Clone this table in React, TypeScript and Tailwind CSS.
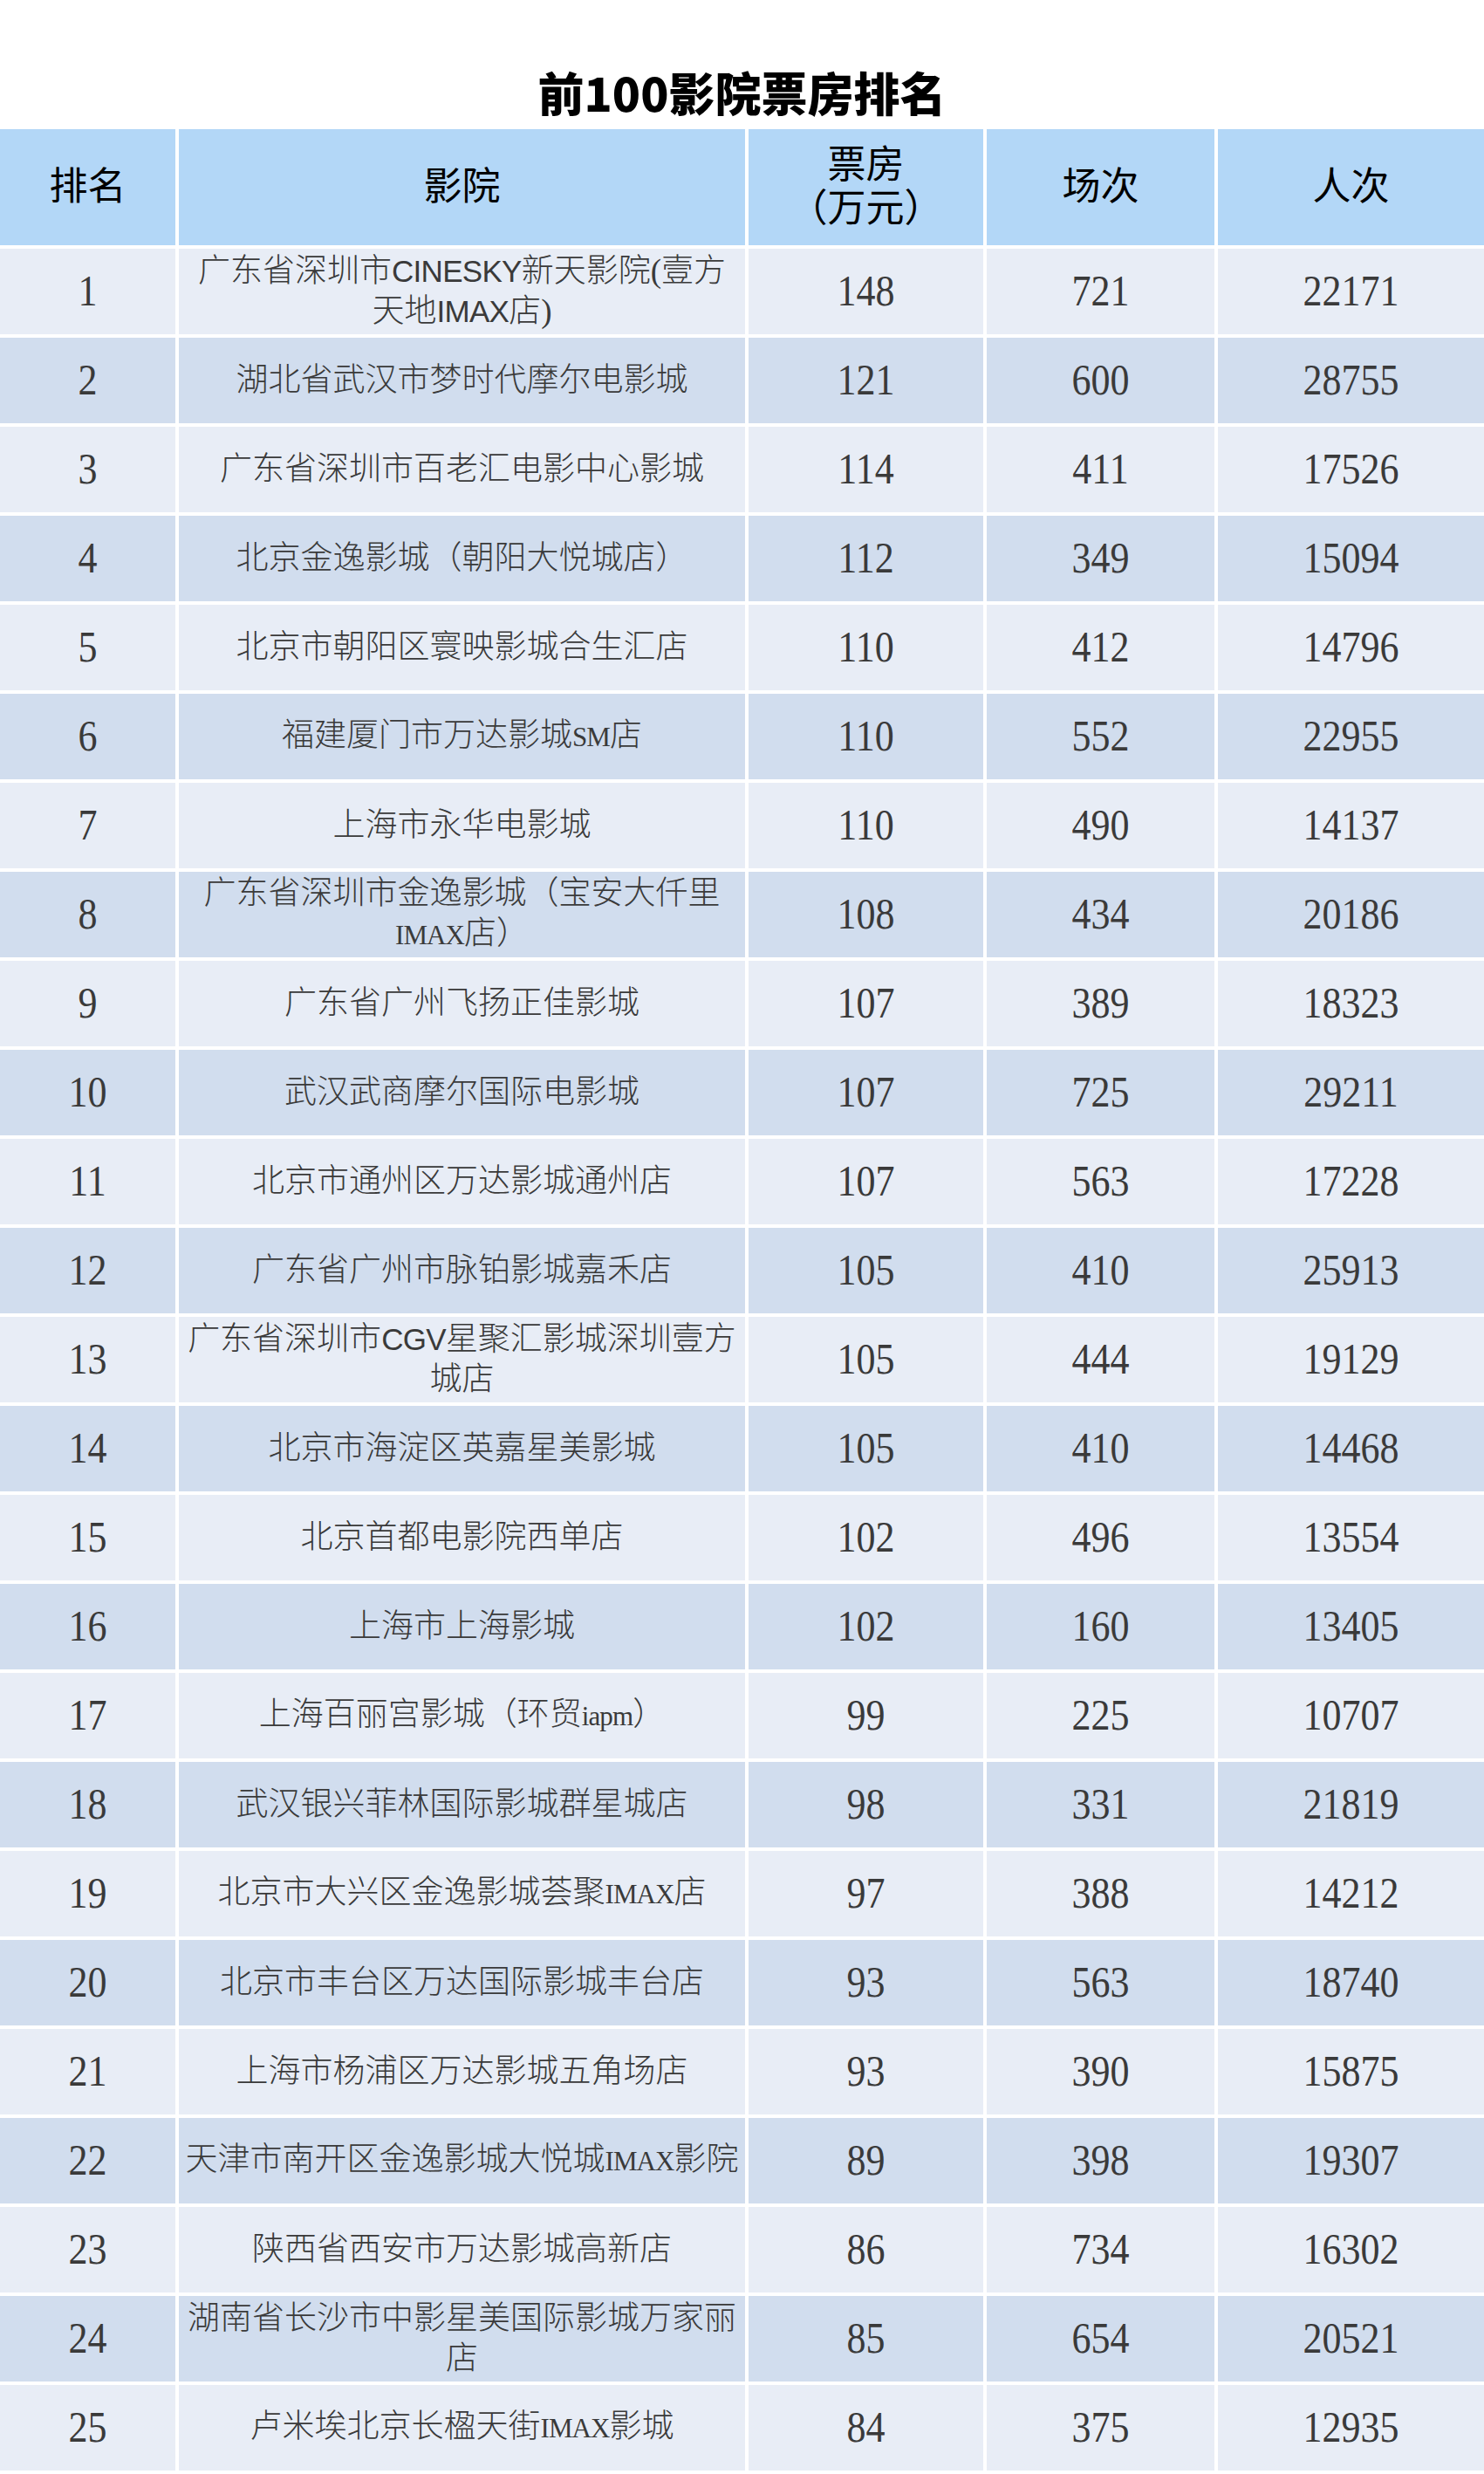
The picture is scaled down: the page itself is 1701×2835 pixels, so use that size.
import React from "react";

type Seg = { t: string; sans?: boolean; lat?: boolean };
type Row = { rank: number; lines: Seg[][]; box: number; shows: number; people: number };

const s = (t: string, sans?: boolean): Seg => ({ t, sans });
const l = (t: string): Seg => ({ t, lat: true });

const rows: Row[] = [
  { rank: 1, lines: [[s("广东省深圳市"), s("CINESKY", true), s("新天影院(壹方")], [s("天地"), s("IMAX", true), s("店)")]], box: 148, shows: 721, people: 22171 },
  { rank: 2, lines: [[s("湖北省武汉市梦时代摩尔电影城")]], box: 121, shows: 600, people: 28755 },
  { rank: 3, lines: [[s("广东省深圳市百老汇电影中心影城")]], box: 114, shows: 411, people: 17526 },
  { rank: 4, lines: [[s("北京金逸影城（朝阳大悦城店）")]], box: 112, shows: 349, people: 15094 },
  { rank: 5, lines: [[s("北京市朝阳区寰映影城合生汇店")]], box: 110, shows: 412, people: 14796 },
  { rank: 6, lines: [[s("福建厦门市万达影城"), l("SM"), s("店")]], box: 110, shows: 552, people: 22955 },
  { rank: 7, lines: [[s("上海市永华电影城")]], box: 110, shows: 490, people: 14137 },
  { rank: 8, lines: [[s("广东省深圳市金逸影城（宝安大仟里")], [l("IMAX"), s("店）")]], box: 108, shows: 434, people: 20186 },
  { rank: 9, lines: [[s("广东省广州飞扬正佳影城")]], box: 107, shows: 389, people: 18323 },
  { rank: 10, lines: [[s("武汉武商摩尔国际电影城")]], box: 107, shows: 725, people: 29211 },
  { rank: 11, lines: [[s("北京市通州区万达影城通州店")]], box: 107, shows: 563, people: 17228 },
  { rank: 12, lines: [[s("广东省广州市脉铂影城嘉禾店")]], box: 105, shows: 410, people: 25913 },
  { rank: 13, lines: [[s("广东省深圳市"), s("CGV", true), s("星聚汇影城深圳壹方")], [s("城店")]], box: 105, shows: 444, people: 19129 },
  { rank: 14, lines: [[s("北京市海淀区英嘉星美影城")]], box: 105, shows: 410, people: 14468 },
  { rank: 15, lines: [[s("北京首都电影院西单店")]], box: 102, shows: 496, people: 13554 },
  { rank: 16, lines: [[s("上海市上海影城")]], box: 102, shows: 160, people: 13405 },
  { rank: 17, lines: [[s("上海百丽宫影城（环贸"), l("iapm"), s("）")]], box: 99, shows: 225, people: 10707 },
  { rank: 18, lines: [[s("武汉银兴菲林国际影城群星城店")]], box: 98, shows: 331, people: 21819 },
  { rank: 19, lines: [[s("北京市大兴区金逸影城荟聚"), l("IMAX"), s("店")]], box: 97, shows: 388, people: 14212 },
  { rank: 20, lines: [[s("北京市丰台区万达国际影城丰台店")]], box: 93, shows: 563, people: 18740 },
  { rank: 21, lines: [[s("上海市杨浦区万达影城五角场店")]], box: 93, shows: 390, people: 15875 },
  { rank: 22, lines: [[s("天津市南开区金逸影城大悦城"), l("IMAX"), s("影院")]], box: 89, shows: 398, people: 19307 },
  { rank: 23, lines: [[s("陕西省西安市万达影城高新店")]], box: 86, shows: 734, people: 16302 },
  { rank: 24, lines: [[s("湖南省长沙市中影星美国际影城万家丽")], [s("店")]], box: 85, shows: 654, people: 20521 },
  { rank: 25, lines: [[s("卢米埃北京长楹天街"), l("IMAX"), s("影城")]], box: 84, shows: 375, people: 12935 },
];

function Num({ v }: { v: number }) {
  return (
    <span className="inline-block scale-y-[1.15] font-['Liberation_Serif',serif] text-[44px] leading-none text-[#3a3a3a]">
      {v}
    </span>
  );
}

export default function App() {
  return (
    <div className="w-[1701px] min-h-[2835px] bg-white font-['Liberation_Serif','Noto_Sans_CJK_SC',serif]">
      <div className="h-[148px] pt-[76px] text-center">
        <h1 className="font-['Noto_Sans_CJK_SC',sans-serif] text-[53px] font-black leading-[58px] text-black">
          前100影院票房排名
        </h1>
      </div>
      <div className="grid grid-cols-[201px_649px_269px_261px_305px] gap-[4px]">
        <div className="flex h-[133px] items-center justify-center bg-[#b3d7f7] text-[44px] leading-[50px] text-black">
          排名
        </div>
        <div className="flex h-[133px] items-center justify-center bg-[#b3d7f7] text-[44px] leading-[50px] text-black">
          影院
        </div>
        <div className="flex h-[133px] flex-col items-center justify-center bg-[#b3d7f7] text-[44px] leading-[50px] text-black">
          <span>票房</span>
          <span>（万元）</span>
        </div>
        <div className="flex h-[133px] items-center justify-center bg-[#b3d7f7] text-[44px] leading-[50px] text-black">
          场次
        </div>
        <div className="flex h-[133px] items-center justify-center bg-[#b3d7f7] text-[44px] leading-[50px] text-black">
          人次
        </div>

        {rows.map((r) => {
          const bg = r.rank % 2 === 1 ? "bg-[#e8edf6]" : "bg-[#d1ddee]";
          return (
            <React.Fragment key={r.rank}>
              <div className={`flex h-[98px] items-center justify-center ${bg}`}>
                <Num v={r.rank} />
              </div>
              <div className={`flex h-[98px] flex-col items-center justify-center ${bg} text-[37px] font-light leading-[46px] text-[#3a3a3a]`}>
                {r.lines.map((line, i) => (
                  <span key={i} className="whitespace-nowrap">
                    {line.map((seg, j) =>
                      seg.sans ? (
                        <span key={j} className="font-['Liberation_Sans',sans-serif] text-[35px] font-normal tracking-[-0.02em]">
                          {seg.t}
                        </span>
                      ) : seg.lat ? (
                        <span key={j} className="text-[31px] font-normal tracking-[-0.03em]">
                          {seg.t}
                        </span>
                      ) : (
                        <span key={j}>{seg.t}</span>
                      )
                    )}
                  </span>
                ))}
              </div>
              <div className={`flex h-[98px] items-center justify-center ${bg}`}>
                <Num v={r.box} />
              </div>
              <div className={`flex h-[98px] items-center justify-center ${bg}`}>
                <Num v={r.shows} />
              </div>
              <div className={`flex h-[98px] items-center justify-center ${bg}`}>
                <Num v={r.people} />
              </div>
            </React.Fragment>
          );
        })}
      </div>
    </div>
  );
}
